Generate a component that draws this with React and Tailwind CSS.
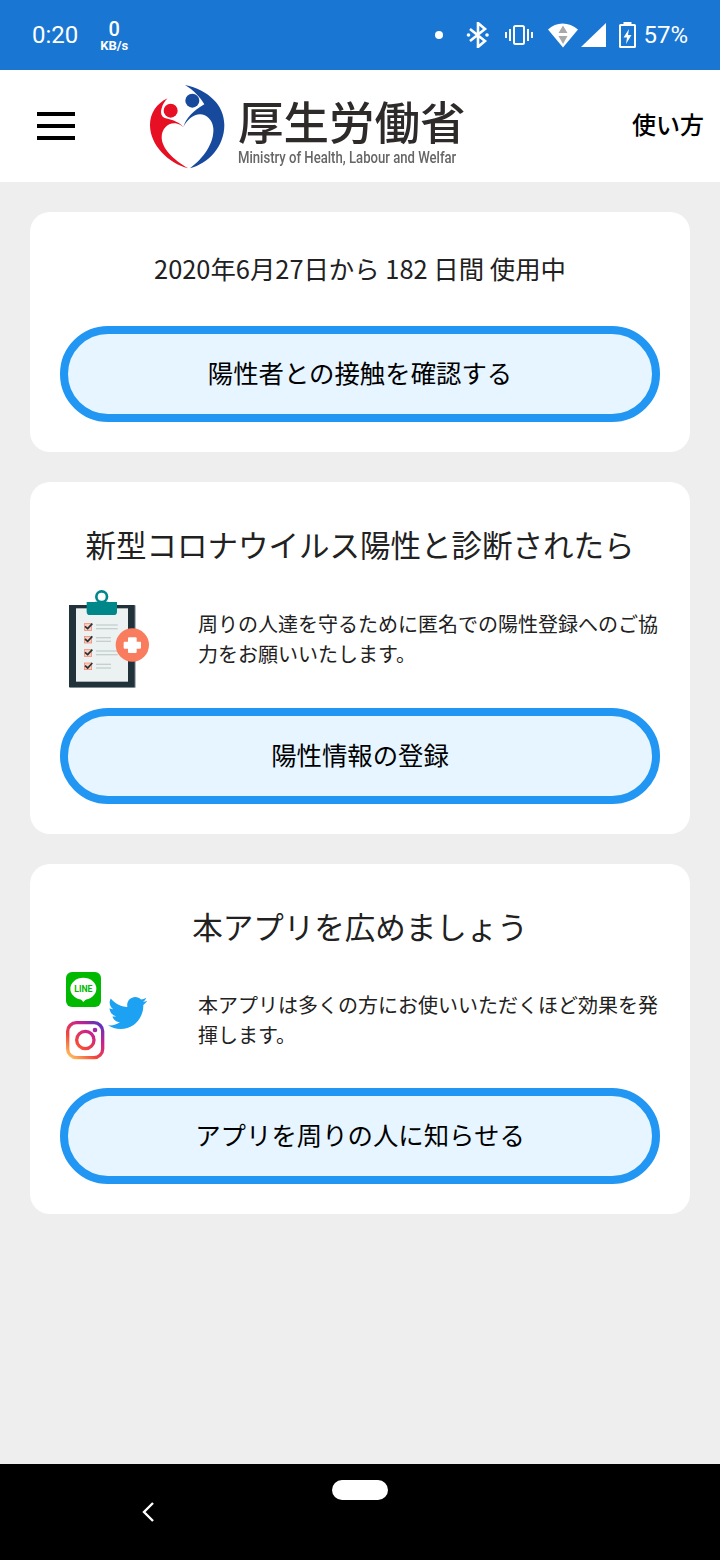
import { FaTwitter } from "react-icons/fa";

const jp = "font-['Noto_Sans_CJK_JP','Noto_Sans',sans-serif]";

function Bluetooth() {
  return (
    <svg width="24" height="26" viewBox="0 0 24 26" fill="none" stroke="white" strokeWidth="2.6">
      <path d="M4 7 L19 19 L12 25 L12 1 L19 7 L4 19" />
      <circle cx="2.5" cy="13" r="1.8" fill="white" stroke="none" />
      <circle cx="21" cy="13" r="1.8" fill="white" stroke="none" />
    </svg>
  );
}

function Vibrate() {
  return (
    <svg width="28" height="20" viewBox="0 0 28 20" fill="white">
      <rect x="9" y="1" width="10" height="18" rx="1.5" fill="none" stroke="white" strokeWidth="2" />
      <rect x="0" y="7" width="2" height="6" />
      <rect x="4" y="4" width="2" height="12" />
      <rect x="22" y="4" width="2" height="12" />
      <rect x="26" y="7" width="2" height="6" />
    </svg>
  );
}

function Wifi() {
  return (
    <svg width="30" height="25" viewBox="0 0 30 25">
      <path d="M0 6.5 C8 -1.5 21 -1.5 30 6.5 L15 24.5 Z" fill="white" />
      <path d="M15 2.5 L19.5 10 H10.5 Z M10.5 13 H19.5 L15 21 Z" fill="#a8a8a8" />
    </svg>
  );
}

function Signal() {
  return (
    <svg width="25" height="24" viewBox="0 0 25 24">
      <path d="M0 24 L25 0 V24 Z" fill="white" />
    </svg>
  );
}

function Battery() {
  return (
    <svg width="17" height="26" viewBox="0 0 17 26">
      <path d="M4.5 0 H12.5 V2 H15.5 A1.5 1.5 0 0 1 17 3.5 V24.5 A1.5 1.5 0 0 1 15.5 26 H1.5 A1.5 1.5 0 0 1 0 24.5 V3.5 A1.5 1.5 0 0 1 1.5 2 H4.5 Z" fill="white" />
      <rect x="2" y="4" width="13" height="20" fill="#1976d2" />
      <path d="M10 7 L4.5 15.5 H8 L7 22 L12.5 13 H9 Z" fill="white" />
    </svg>
  );
}

function StatusBar() {
  return (
    <div className="h-[70px] bg-[#1976d2] text-white flex items-center font-['Roboto',sans-serif]">
      <span className="ml-8 text-[24px] leading-none">0:20</span>
      <div className="ml-[21px] w-[30px] flex flex-col items-center">
        <span className="text-[20px] font-medium leading-[20px]">0</span>
        <span className="text-[13px] font-bold leading-[13px]">KB/s</span>
      </div>
      <div className="ml-auto flex items-center mr-8">
        <span className="w-2 h-2 rounded-full bg-white mr-[23px]" />
        <div className="mr-[15px]"><Bluetooth /></div>
        <div className="mr-[15px]"><Vibrate /></div>
        <div className="mr-[3px]"><Wifi /></div>
        <div className="mr-[13px]"><Signal /></div>
        <div className="mr-[7px]"><Battery /></div>
        <span className="text-[24px] leading-none">57%</span>
      </div>
    </div>
  );
}

function LogoMark() {
  return (
    <svg width="85" height="92" viewBox="0 0 255 276" className="shrink-0">
      <path d="M120 15 C190 30 238 75 238 135 C238 200 190 250 135 265 C175 235 208 190 205 145 C203 120 185 103 165 103 C145 103 125 120 115 142 C122 115 145 92 178 73 C165 50 145 30 120 15 Z" fill="#174a9c" />
      <circle cx="142" cy="62" r="21" fill="#174a9c" />
      <path d="M68 55 C35 70 15 100 15 135 C15 195 70 250 130 265 C85 240 50 205 50 172 C50 145 70 127 92 130 C103 132 110 136 115 142 C105 128 85 120 62 115 C50 112 45 100 50 85 C53 72 60 63 68 55 Z" fill="#e60f24" />
      <circle cx="77" cy="92" r="21" fill="#e60f24" />
    </svg>
  );
}

function Header() {
  return (
    <div className="h-28 bg-white flex items-center">
      <div className="ml-[37px] w-[38px] flex flex-col gap-2">
        <span className="h-1 bg-black" />
        <span className="h-1 bg-black" />
        <span className="h-1 bg-black" />
      </div>
      <div className="ml-[70px] flex items-center">
        <LogoMark />
        <div className="ml-[8px] mt-[10px] flex flex-col blur-[0.3px]">
          <span className={`${jp} text-[45.5px] leading-[50px] font-medium text-[#2e2a2a] whitespace-nowrap`}>厚生労働省</span>
          <span className="mt-[4px] font-['Roboto',sans-serif] text-[16px] leading-[18px] font-medium text-[#666] whitespace-nowrap origin-left scale-x-[0.82]">
            Ministry of Health, Labour and Welfar
          </span>
        </div>
      </div>
      <span className={`${jp} ml-auto mr-4 mb-[4px] text-[24px] font-medium text-black`}>使い方</span>
    </div>
  );
}

function ClipboardIcon() {
  return (
    <svg width="120" height="120" viewBox="0 0 360 360">
      <rect x="60" y="76" width="197" height="247" fill="#8c9aa0" />
      <rect x="57" y="75" width="197" height="247" fill="#22323b" />
      <rect x="78" y="85" width="156" height="220" fill="#ecf1f1" />
      <circle cx="155" cy="50" r="16" fill="none" stroke="#00878a" strokeWidth="8" />
      <path d="M135 65 H175 V66 H201 V95 A10 10 0 0 1 191 105 H120 A10 10 0 0 1 110 95 V66 H135 Z" fill="#00878a" />
      {[140, 178, 218, 258].map((y, i) => (
        <g key={y}>
          <rect x="103" y={y - 9} width="22" height="20" fill="#f9cdbf" stroke="#f47d5e" strokeWidth="2" />
          <path d={`M105 ${y - 1} L113 ${y + 6} L127 ${y - 9}`} fill="none" stroke="#22323b" strokeWidth="5" />
          <rect x="138" y={y - 7} width={i % 2 ? 45 : 65} height="4" fill="#c5cfcf" />
          <rect x="138" y={y + 4} width={i % 2 ? 45 : 65} height="4" fill="#c5cfcf" />
        </g>
      ))}
      <circle cx="247" cy="195" r="50" fill="#f97c5e" />
      <path d="M237 172 H257 A3 3 0 0 1 260 175 V185 H270 A3 3 0 0 1 273 188 V203 A3 3 0 0 1 270 206 H260 V216 A3 3 0 0 1 257 219 H237 A3 3 0 0 1 234 216 V206 H224 A3 3 0 0 1 221 203 V188 A3 3 0 0 1 224 185 H234 V175 A3 3 0 0 1 237 172 Z" fill="#ffffff" />
    </svg>
  );
}

function SocialIcons() {
  return (
    <svg width="120" height="120" viewBox="0 0 360 360">
      <defs>
        <linearGradient id="ig" gradientUnits="userSpaceOnUse" x1="60" y1="295" x2="150" y2="185">
          <stop offset="0" stopColor="#fdc65f" />
          <stop offset="0.35" stopColor="#f4473a" />
          <stop offset="0.7" stopColor="#c8208f" />
          <stop offset="1" stopColor="#4f38c0" />
        </linearGradient>
      </defs>
      <rect x="48" y="36" width="105" height="105" rx="18" fill="#00b900" />
      <ellipse cx="100" cy="86" rx="39" ry="33" fill="white" />
      <path d="M90 115 L100 126 L114 112 Z" fill="white" />
      <text x="100" y="95" textAnchor="middle" fontSize="26" fontWeight="700" fill="#00b900" fontFamily="Roboto, sans-serif">LINE</text>
      <FaTwitter x={174} y={100} size={118} color="#1da1f2" />
      <rect x="53" y="188" width="105" height="105" rx="26" fill="none" stroke="url(#ig)" strokeWidth="10" />
      <circle cx="106" cy="240" r="26" fill="none" stroke="url(#ig)" strokeWidth="10" />
      <circle cx="135" cy="210" r="7" fill="url(#ig)" />
    </svg>
  );
}

function PillButton({ label }) {
  return (
    <button className={`${jp} h-24 w-full pb-1 rounded-full border-8 border-[#2196f3] bg-[#e6f5ff] text-[25.4px] font-normal text-black`}>
      {label}
    </button>
  );
}

function Card({ title, icon, body, label, rowClass, bodyClass }) {
  return (
    <div className="bg-white rounded-[20px] px-[30px] pt-[42px] pb-[30px]">
      <h2 className={`${jp} text-center text-[30.5px] leading-[40px] font-normal text-[#212121]`}>{title}</h2>
      <div className={`flex items-center -ml-[10px] -mr-[2px] ${rowClass}`}>
        <div className="w-[148px] shrink-0">{icon}</div>
        <p className={`${jp} text-[20px] leading-[30px] text-[#212121] ${bodyClass}`}>{body}</p>
      </div>
      <PillButton label={label} />
    </div>
  );
}

export default function App() {
  return (
    <div className="w-[720px] h-[1560px] flex flex-col bg-[#eeeeee]">
      <StatusBar />
      <Header />
      <main className="flex-1 flex flex-col gap-[30px] p-[30px]">
        <div className="bg-white rounded-[20px] px-[30px] pt-[35px] pb-[30px]">
          <p className={`${jp} text-center text-[25.4px] leading-[42px] text-[#212121] mb-[37px]`}>2020年6月27日から 182 日間 使用中</p>
          <PillButton label="陽性者との接触を確認する" />
        </div>
        <Card
          title="新型コロナウイルス陽性と診断されたら"
          icon={<ClipboardIcon />}
          body="周りの人達を守るために匿名での陽性登録へのご協力をお願いいたします。"
          label="陽性情報の登録"
          rowClass="h-[144px] pt-[8px]"
          bodyClass="pb-[2px]"
        />
        <Card
          title="本アプリを広めましょう"
          icon={<SocialIcons />}
          body="本アプリは多くの方にお使いいただくほど効果を発揮します。"
          label="アプリを周りの人に知らせる"
          rowClass="h-[142px] pt-[6px]"
          bodyClass=""
        />
      </main>
      <div className="h-24 bg-black flex flex-col shrink-0">
        <span className="self-center mt-4 w-14 h-5 rounded-full bg-white" />
        <svg width="12" height="20" viewBox="0 0 12 20" fill="none" stroke="white" strokeWidth="2.4" className="ml-[142px] mt-[2px]">
          <path d="M11 1 L2 10 L11 19" />
        </svg>
      </div>
    </div>
  );
}
